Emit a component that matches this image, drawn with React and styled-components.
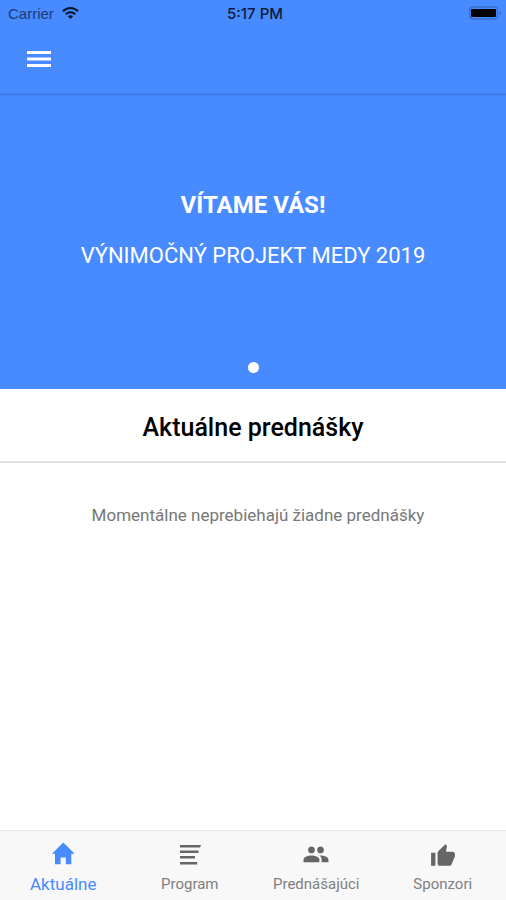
import React from "react";
import styled, { createGlobalStyle } from "styled-components";

const GlobalStyle = createGlobalStyle`
  *, *::before, *::after { box-sizing: border-box; }
  body {
    margin: 0;
    font-family: Roboto, "Noto Sans", sans-serif;
    background: #fff;
    color: #000;
  }
`;

const Page = styled.div`
  min-height: 100vh;
  display: flex;
  flex-direction: column;
`;

const Header = styled.header`
  position: relative;
  background: #488aff;
  border-bottom: 1px solid #4480ee;
  box-shadow: 0 1px 2px rgba(0, 0, 0, 0.2);
`;

const StatusBar = styled.div`
  display: grid;
  grid-template-columns: 1fr auto 1fr;
  align-items: center;
  height: 26px;
  padding: 0 4px 0 8px;
  font-family: "Liberation Sans", Arial, sans-serif;
  font-size: 15px;
`;

const Carrier = styled.span`
  display: flex;
  align-items: center;
  gap: 8px;
  color: #1d3c74;
`;

const Clock = styled.time`
  font-family: Inter, sans-serif;
  font-weight: 500;
  color: #0c1c3a;
`;

const BatteryIcon = styled.svg`
  justify-self: end;
`;

const Toolbar = styled.div`
  display: flex;
  align-items: center;
  height: 67px;
  padding: 0 18px;
`;

const MenuButton = styled.button`
  display: grid;
  place-items: center;
  width: 42px;
  height: 42px;
  padding: 0;
  border: 0;
  background: none;
  color: #fff;
  cursor: pointer;
`;

const Main = styled.main`
  flex: 1;
`;

const Slide = styled.section`
  display: flex;
  flex-direction: column;
  height: 295px;
  padding: 4px 16px 16px;
  background: #488aff;
  color: #fff;
  text-align: center;
`;

const SlideBody = styled.div`
  flex: 1;
  display: flex;
  flex-direction: column;
  justify-content: center;
  gap: 22px;
`;

const SlideTitle = styled.h1`
  margin: 0;
  font-size: 24px;
  line-height: 30px;
  font-weight: 700;
`;

const SlideText = styled.p`
  margin: 0;
  font-size: 22px;
  line-height: 28px;
`;

const Pager = styled.div`
  display: flex;
  justify-content: center;
`;

const PagerDot = styled.button`
  width: 11px;
  height: 11px;
  padding: 0;
  border: 0;
  border-radius: 50%;
  background: #fff;
`;

const SectionTitle = styled.h2`
  margin: 0;
  padding: 24px 16px 18px;
  border-bottom: 2px solid #e2e2e2;
  font-size: 25px;
  line-height: 30px;
  font-weight: 500;
  text-align: center;
`;

const EmptyNote = styled.p`
  margin: 0;
  padding: 40px 16px 24px 26px;
  font-size: 17px;
  line-height: 24px;
  color: #777;
  text-align: center;
`;

const TabBar = styled.nav`
  position: sticky;
  bottom: 0;
  display: grid;
  grid-template-columns: repeat(4, 1fr);
  height: 70px;
  border-top: 1px solid #e9e9e9;
  background: #f8f8f8;
`;

const Tab = styled.a`
  display: flex;
  flex-direction: column;
  align-items: center;
  justify-content: flex-end;
  gap: 6px;
  padding-bottom: 6px;
  font-size: ${({ $active }) => ($active ? 17 : 15)}px;
  line-height: 20px;
  color: ${({ $active }) => ($active ? "#488aff" : "#808080")};
  text-decoration: none;

  svg {
    color: ${({ $active }) => ($active ? "#488aff" : "#666")};
  }
`;

const TabIcon = ({ children, viewBox = "0 0 26 26" }) => (
  <svg width="26" height="26" viewBox={viewBox} fill="currentColor" aria-hidden="true">
    {children}
  </svg>
);

const tabs = [
  {
    label: "Aktuálne",
    active: true,
    icon: (
      <TabIcon>
        <path d="M10.600 22.300V15.500H15.800V22.300H21.300V11.800H24.700L13.300 0.500L2 11.800H5V22.300Z" />
      </TabIcon>
    ),
  },
  {
    label: "Program",
    icon: (
      <TabIcon>
        <path d="M3 3H24L23 5.500H3ZM3 8.500H21.500V11H3ZM3 14H18V16.500H3ZM3 20H20.200V22.500H3Z" />
      </TabIcon>
    ),
  },
  {
    label: "Prednášajúci",
    icon: (
      <TabIcon viewBox="0.500 1 23 23">
        <path d="M16 11c1.660 0 2.990-1.340 2.990-3S17.660 5 16 5s-3 1.340-3 3 1.340 3 3 3zm-8 0c1.660 0 2.990-1.340 2.990-3S9.660 5 8 5 5 6.340 5 8s1.340 3 3 3zm0 2c-2.330 0-7 1.170-7 3.500V19h14v-2.500c0-2.330-4.670-3.500-7-3.500zm8 0c-.290 0-.620.020-.970.050 1.160.840 1.970 1.970 1.970 3.450V19h6v-2.500c0-2.330-4.670-3.500-7-3.500z" />
      </TabIcon>
    ),
  },
  {
    label: "Sponzori",
    icon: (
      <TabIcon viewBox="0 -1 24 24">
        <path d="M1 21h4V9H1v12zm22-11c0-1.100-.900-2-2-2h-6.310l.950-4.570.030-.320c0-.410-.170-.790-.440-1.060L14.170 1 7.590 7.590C7.220 7.950 7 8.450 7 9v10c0 1.100.900 2 2 2h9c.830 0 1.540-.500 1.840-1.220l3.020-7.050c.090-.230.140-.470.140-.730v-2z" />
      </TabIcon>
    ),
  },
];

export default function App() {
  return (
    <Page>
      <GlobalStyle />
      <Header>
        <StatusBar>
          <Carrier>
            Carrier
            <svg width="17" height="12" viewBox="0 0 17 12" aria-label="Wi-Fi">
              <g fill="none" stroke="#071429" strokeWidth="2">
                <path d="M1 4.300C5.200 0 11.800 0 16 4.300" />
                <path d="M3.800 7.200C6.500 4.700 10.500 4.700 13.200 7.200" />
              </g>
              <path d="M5.900 9.200C7.400 7.800 9.600 7.800 11.100 9.200L8.500 11.900Z" fill="#071429" />
            </svg>
          </Carrier>
          <Clock>5:17 PM</Clock>
          <BatteryIcon width="33" height="14" viewBox="0 0 33 14" aria-label="Battery">
            <rect x="0.500" y="1" width="28" height="12" rx="3" fill="none" stroke="#3a6fcd" strokeWidth="1.500" />
            <rect x="2" y="3" width="25" height="8" rx="1" fill="#000" />
            <path d="M30.300 5C32.300 5.500 32.300 8.500 30.300 9Z" fill="#3a6fcd" />
          </BatteryIcon>
        </StatusBar>
        <Toolbar>
          <MenuButton type="button" aria-label="Menu">
            <svg width="24" height="18" viewBox="0 0 24 18" fill="currentColor" aria-hidden="true">
              <path d="M0 0H24V3H0ZM0 6.500H24V9.500H0ZM0 13H24V16H0Z" />
            </svg>
          </MenuButton>
        </Toolbar>
      </Header>
      <Main>
        <Slide>
          <SlideBody>
            <SlideTitle>VÍTAME VÁS!</SlideTitle>
            <SlideText>VÝNIMOČNÝ PROJEKT MEDY 2019</SlideText>
          </SlideBody>
          <Pager>
            <PagerDot type="button" aria-label="1" />
          </Pager>
        </Slide>
        <SectionTitle>Aktuálne prednášky</SectionTitle>
        <EmptyNote>Momentálne neprebiehajú žiadne prednášky</EmptyNote>
      </Main>
      <TabBar>
        {tabs.map(({ label, active, icon }) => (
          <Tab key={label} href="#" $active={active} aria-current={active ? "page" : undefined}>
            {icon}
            {label}
          </Tab>
        ))}
      </TabBar>
    </Page>
  );
}
